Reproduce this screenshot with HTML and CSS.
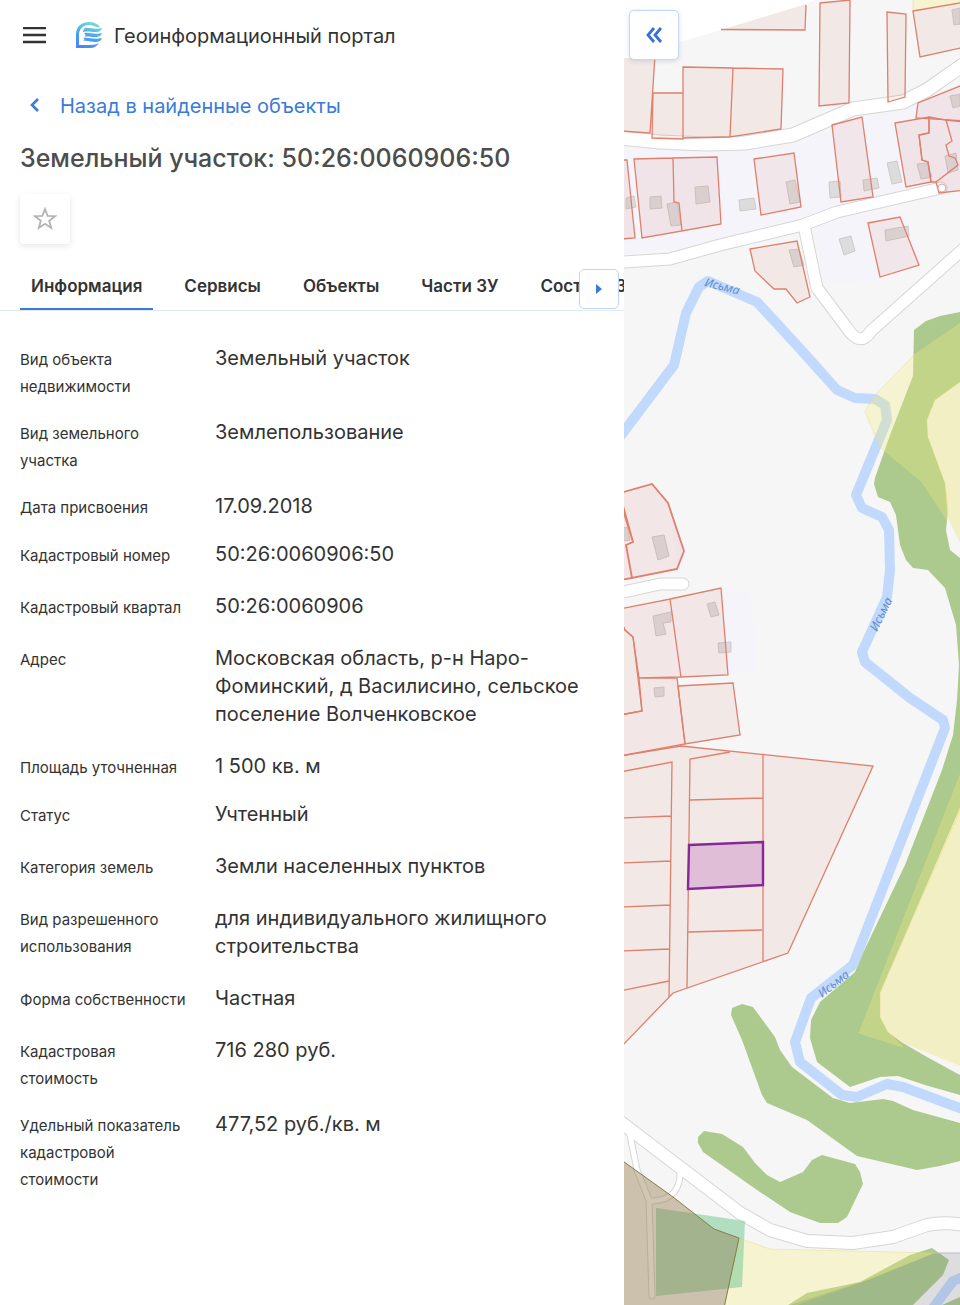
FILE: index.html
```html
<!DOCTYPE html>
<html lang="ru">
<head>
    <meta charset="UTF-8">
    <meta name="viewport" content="width=device-width, initial-scale=1.0">
    <title>Геоинформационный портал</title>
    <link rel="stylesheet" href="styles.css">
</head>
<body>
    <div class="layout">
        <main class="panel">
            <header class="header">
                <button class="icon-button" type="button" aria-label="Меню">
                    <svg width="24" height="18" viewBox="0 0 24 18"><path d="M0 1h23M0 8h23M0 15h23" stroke="#333" stroke-width="2.4"/></svg>
                </button>
                <svg class="logo" width="28" height="28" viewBox="0 0 28 28">
                    <defs>
                        <linearGradient id="logoFill" gradientUnits="userSpaceOnUse" x1="8" y1="27" x2="18" y2="0">
                            <stop offset="0" stop-color="#4a84f5"/>
                            <stop offset="0.5" stop-color="#4aa5ee"/>
                            <stop offset="1" stop-color="#78e0d4"/>
                        </linearGradient>
                    </defs>
                    <g fill="url(#logoFill)">
                        <path d="M0 26V13C0 5 5 0 13 0c5 0 9 2 11 5-4 1-7-2-11-2C7 3 3 7 3 13v10h11c4 0 7-1 9-2-2 3-5 5-9 5z"/>
                        <path d="M9 6c5-1 9 2 17 0-1 3-3 4-6 4-5 0-8-1-13 0 0-2 1-3 2-4zM8 11c6-1 10 2 18 0-1 3-3 4-7 4-5 0-7-1-11 0 2-1 2-2 0-4zM7 16c6-1 11 2 19 0-1 3-3 4-7 4-4 0-7-2-12-1 2-1 2-2 0-3z"/>
                    </g>
                </svg>
                <span class="portal-name">Геоинформационный портал</span>
            </header>

            <a class="back" href="#">
                <svg width="10" height="16" viewBox="0 0 10 16"><path d="M8 1L2 7l6 6" fill="none" stroke="#3b7bd8" stroke-width="2.6"/></svg>
                <span>Назад в найденные объекты</span>
            </a>

            <h1>Земельный участок: 50:26:0060906:50</h1>

            <button class="favorite" type="button" aria-label="В избранное">
                <svg width="26" height="26" viewBox="0 0 26 26"><path d="M13 3l2.6 6.900 7.400.3-5.800 4.600 2 7.100L13 17.800l-6.200 4.100 2-7.100L3 10.200l7.400-.3z" fill="none" stroke="#b3b3b3" stroke-width="1.8"/></svg>
            </button>

            <div class="tabs-wrap">
                <nav class="tabs">
                    <a class="tab active" href="#">Информация</a>
                    <a class="tab" href="#">Сервисы</a>
                    <a class="tab" href="#">Объекты</a>
                    <a class="tab" href="#">Части ЗУ</a>
                    <a class="tab" href="#">Состав ЕЗП</a>
                </nav>
                <button class="tabs-next" type="button" aria-label="Далее">
                    <svg width="8" height="10" viewBox="0 0 8 10"><path d="M1 0l6 5-6 5z" fill="#3b7bd8"/></svg>
                </button>
            </div>

            <dl class="info">
                <div class="row"><dt>Вид объекта недвижимости</dt><dd>Земельный участок</dd></div>
                <div class="row"><dt>Вид земельного участка</dt><dd>Землепользование</dd></div>
                <div class="row"><dt>Дата присвоения</dt><dd>17.09.2018</dd></div>
                <div class="row wide"><dt>Кадастровый номер</dt><dd>50:26:0060906:50</dd></div>
                <div class="row wide"><dt>Кадастровый квартал</dt><dd>50:26:0060906</dd></div>
                <div class="row wide"><dt>Адрес</dt><dd>Московская область, р-н Наро-Фоминский, д Василисино, сельское поселение Волченковское</dd></div>
                <div class="row"><dt>Площадь уточненная</dt><dd>1 500 кв. м</dd></div>
                <div class="row wide"><dt>Статус</dt><dd>Учтенный</dd></div>
                <div class="row wide"><dt>Категория земель</dt><dd>Земли населенных пунктов</dd></div>
                <div class="row wide"><dt>Вид разрешенного использования</dt><dd>для индивидуального жилищного строительства</dd></div>
                <div class="row wide"><dt>Форма собственности</dt><dd>Частная</dd></div>
                <div class="row"><dt>Кадастровая стоимость</dt><dd>716 280 руб.</dd></div>
                <div class="row"><dt>Удельный показатель кадастровой стоимости</dt><dd>477,52 руб./кв. м</dd></div>
            </dl>
        </main>

        <section class="map">
            <svg class="map-canvas" viewBox="624 0 336 1305" preserveAspectRatio="xMinYMin slice">
                <rect x="624" y="0" width="700" height="1305" fill="#f6f6f6"/>

                <!-- residential areas -->
                <g fill="#f5f4fa">
                    <path d="M620 150L740 149L800 143L863 115L918 103L960 86V190L906 198L800 220L700 243L620 256z"/>
                    <path d="M812 226L870 211L905 211L922 262L880 280L826 283z"/>
                    <path d="M722 592L750 592L757 670L728 675zM670 503L688 550L690 566L677 569z"/>
                </g>

                <!-- forest -->
                <g fill="#adca8e">
                    <path d="M960 312L940 316L926 321L914 330L913 376L890 435L875 478L874 484L878 497L890 502L896 515L900 545L906 560L913 568L928 570L945 588L956 625L959 665L957 700L953 735L942 770L905 865L862 955L855 972L820 1002L811 1020L810 1038L817 1062L850 1087L880 1077L898 1076L925 1085L960 1095V1075L927 1057L903 1043L888 1032L880 1017V993L960 808V558L950 550L946 530L948 510L945 483L928 437L927 420L935 400L960 382z"/>
                    <path d="M732 1008L742 1004L753 1007L775 1037L780 1050L792 1067L833 1098L850 1103L883 1099L893 1101L913 1110L960 1123V1161L940 1166L917 1170L857 1156L807 1120L767 1103L762 1095L742 1040L731 1015z"/>
                    <path d="M698 1137L704 1131L722 1134L743 1147L755 1163L767 1175L780 1182L803 1172L812 1160L822 1155L855 1164L860 1172L863 1184L847 1217L838 1223H820L790 1212L757 1190L703 1152L698 1143z"/>
                    <path d="M788 1305L807 1293L860 1282L910 1255L932 1248L949 1260L943 1275L913 1305zM942 1305L960 1297V1305z"/>
                </g>

                <!-- river -->
                <path d="M616 442L674 365L686 313L699 287L708 281L757 302L803 352L837 390L855 398L875 399L885 405L887 420L856 495L862 508L882 517L889 530L890 570L887 597L862 652L865 662L910 698L943 720L945 728L917 800L853 965L811 998L795 1042L800 1062L842 1095L857 1097L887 1084L903 1087L965 1110" class="river"/>
                <path d="M933 1308L953 1281L965 1276" class="river"/>

                <!-- farmland -->
                <g fill="#f3efc4">
                    <path d="M960 382L935 400L927 420L928 437L945 483L948 518L960 543z"/>
                    <path d="M960 808L880 993V1017L888 1032L903 1043L960 1066z"/>
                </g>
                <g class="field">
                    <path d="M962 322L914 355L873 397L865 412L880 447L922 482L947 520L948 510L945 483L928 437L927 420L935 400L962 381z"/>
                    <path d="M962 770L859 1033L903 1047L888 1032L880 1017V993L962 806z"/>
                    <path d="M739 1238L770 1249L934 1253L870 1279L788 1308H724z"/>
                    <path d="M913 -2H962V3L913 11z"/>
                </g>
                <path d="M934 1253H960V1305H790L870 1279z" fill="#666670" fill-opacity="0.17"/>
                <path d="M934 1253H960" stroke="#bdbdbd"/>

                <!-- roads: casing first, surface over it -->
                <g class="road-casing">
                    <path d="M610 137L660 142L705 144L745 143L793 135L853 109L903 102L927 90L970 60" stroke-width="15"/>
                    <path d="M610 263L670 259L720 245L803 225L837 212L941 188" stroke-width="13"/>
                    <path d="M804 225L808 245L817 288L847 328Q860 348 871 331L970 243" stroke-width="13"/>
                    <path d="M610 595L660 584H683" stroke-width="13"/>
                    <path d="M610 1114L673 1162L740 1213L770 1230L807 1241L853 1243L893 1237L927 1225Q945 1221 970 1226" stroke-width="14"/>
                    <path d="M629 1130L637 1170L649 1200L652 1296M680 1168Q682 1200 652 1201" stroke-width="7"/>
                </g>
                <g class="road">
                    <path d="M610 137L660 142L705 144L745 143L793 135L853 109L903 102L927 90L970 60" stroke-width="13"/>
                    <path d="M610 263L670 259L720 245L803 225L837 212L941 188" stroke-width="11"/>
                    <path d="M804 225L808 245L817 288L847 328Q860 348 871 331L970 243" stroke-width="11"/>
                    <path d="M610 595L660 584H683" stroke-width="11"/>
                    <path d="M610 1114L673 1162L740 1213L770 1230L807 1241L853 1243L893 1237L927 1225Q945 1221 970 1226" stroke-width="12"/>
                    <path d="M629 1130L637 1170L649 1200L652 1296M680 1168Q682 1200 652 1201" stroke-width="5"/>
                </g>

                <!-- buildings -->
                <g class="building">
                    <path d="M695 187L708 186L710 202L696 204zM650 197L661 196L662 208L650 209zM667 204L677 202L681 225L671 226zM739 200L754 198L756 209L740 211zM786 182L795 180L800 202L790 204z"/>
                    <path d="M829 182L840 181L841 197L830 198zM863 180L877 178L879 188L864 191zM887 163L897 161L902 182L892 184zM917 164L927 163L932 177L921 179zM945 156L956 153L958 170L948 173zM950 96L960 94V106L953 108zM952 10L960 8V24L954 25z"/>
                    <path d="M839 239L851 236L855 251L844 255zM885 230L908 226L909 236L886 241zM789 250L799 249L804 265L794 267zM626 198L634 196L636 207L626 209z"/>
                    <path d="M652 537L664 535L669 556L658 560zM653 616L671 612V622L663 623L666 634L656 636zM707 604L715 602L719 615L711 617zM718 643L731 642V652L719 653zM654 688L664 687V696L655 697zM623 528L627 527L630 540L623 541z"/>
                </g>

                <!-- cadastral parcels -->
                <g class="parcel">
                    <path d="M620 55H655L650 133L620 131zM653 93H683V139L652 138zM683 67L733 68L730 137L683 138zM733 68L783 69L781 129L730 137z"/>
                    <path d="M820 3L850 0L849 103L819 106zM887 12L906 14L905 97L888 102zM913 11L965 2V47L920 57z"/>
                    <path d="M721 29L806 4L805 30z" stroke="none"/>
                    <path d="M832 125L862 117L873 197L841 202zM754 159L794 153L801 207L761 215zM750 249L797 241L810 297L797 303L786 289H774L755 271zM868 223L900 217L919 265L880 277z"/>
                </g>
                <g class="parcel pink">
                    <path d="M620 160H627L635 238L620 239zM634 159L673 158L674 202L679 203L682 231L642 238zM673 158L717 157L721 224L682 231L679 203L674 202z"/>
                    <path d="M965 84L918 103L916 118L965 121zM895 123L929 117V133L919 135L922 160L928 162L931 182L906 187z"/>
                    <path d="M929 117L946 120L952 141L946 145L949 156L955 158L958 165L936 182H931L928 162L922 160L919 135L929 133zM946 120L965 122V190L939 193L936 182L958 165L955 158L949 156L946 145L952 141z"/>
                    <path d="M620 493L652 484L668 503L684 551L677 569L632 578L626 545L633 542L620 495zM620 500L633 542L626 545L632 578L620 580z" stroke-width="1.8"/>
                    <path d="M620 609L670 599L681 677L639 678L633 637L625 630L620 620zM670 599L721 588L728 675L681 677zM639 678H677L685 744L620 756V715L642 711z"/>
                </g>
                <circle cx="942" cy="188" r="4" fill="#fff" stroke="#d9a9a4"/>
                <g class="parcel">
                    <path d="M620 620L625 630L633 637L642 711L620 715zM678 686L733 683L740 735L685 744z"/>
                    <path d="M620 756L681 746L873 766L788 953L673 993L620 1048z"/>
                    <path d="M620 772L672 762L669 997M620 818L671 816M620 863L671 861M620 907L670 905M620 951L669 949M620 991L669 981M730 752L690 759L687 988M763 754V961M690 800L763 798M688 932L762 930" fill="none"/>
                </g>
                <path d="M689 845L763 842V885L688 889z" fill="#cf93c8" fill-opacity="0.5" stroke="#87289a" stroke-width="2.4"/>

                <!-- zones in the bottom corner -->
                <path d="M656 1208L745 1221L742 1287L656 1296z" fill="#78cb96" fill-opacity="0.55"/>
                <path d="M620 1159L673 1197L714 1229L739 1238L724 1308H620z" fill="#8f7745" fill-opacity="0.42" stroke="#8a7c4c"/>

                <path d="M610 -10H840L806 4L721 30L680 42L655 58H610z" fill="#fff"/>
                <path d="M721 29.5L805 30L806 5" fill="none" stroke="#df7f6c" stroke-width="1.3"/>

                <g class="river-name">
                    <text transform="translate(704 286) rotate(14)">Исьма</text>
                    <text transform="translate(877 632) rotate(-64)">Исьма</text>
                    <text transform="translate(822 998) rotate(-38)">Исьма</text>
                </g>
            </svg>
            <button class="collapse" type="button" aria-label="Свернуть панель">
                <svg width="18" height="18" viewBox="0 0 18 18"><path d="M9 2L3 9l6 7M16 2l-6 7 6 7" fill="none" stroke="#3570dc" stroke-width="2.8"/></svg>
            </button>
        </section>
    </div>
</body>
</html>
```
FILE: styles.css
```css
* {
    box-sizing: border-box;
}

body {
    margin: 0;
    font-family: Inter, 'Liberation Sans', sans-serif;
    font-size: 20px;
    line-height: 28px;
    color: #333;
    background-color: #fff;
}

button {
    padding: 0;
    border: none;
    background-color: #fff;
    cursor: pointer;
    display: flex;
    justify-content: center;
    align-items: center;
}

a {
    color: inherit;
    text-decoration: none;
}

.layout {
    display: flex;
    min-height: 100vh;
}

.panel {
    flex: 0 0 65%;
    min-width: 0;
}

.header {
    display: flex;
    align-items: center;
    padding: 21px 20px 0;
}

.icon-button {
    width: 30px;
    height: 30px;
}

.logo {
    margin: 0 10px 0 26px;
}

.back {
    display: flex;
    align-items: center;
    gap: 20px;
    padding: 41px 20px 0 30px;
    color: #3b7bd8;
}

h1 {
    margin: 22px 20px 20px;
    font-size: 25px;
    line-height: 32px;
    font-weight: 500;
    color: #4d4d4d;
}

.favorite {
    width: 50px;
    height: 50px;
    margin-left: 20px;
    border-radius: 4px;
    box-shadow: 0 2px 6px rgba(0, 0, 0, 0.1);
}

.tabs-wrap {
    position: relative;
    margin-top: 18px;
    border-bottom: 1px solid #e3e9f0;
}

.tabs {
    display: flex;
    gap: 20px;
    padding-left: 20px;
    overflow: hidden;
}

.tab {
    padding: 10px 11px 8px;
    border-bottom: 2px solid transparent;
    font-size: 17px;
    font-weight: 600;
    white-space: nowrap;
}

.tab.active {
    border-color: #3b7bd8;
}

.tabs-next {
    position: absolute;
    right: 5px;
    bottom: 1px;
    width: 40px;
    height: 40px;
    border: 1px solid #bfd5f5;
    border-radius: 5px;
}

.info {
    margin: 0;
    padding: 33px 20px;
}

.row {
    display: grid;
    grid-template-columns: 175px 1fr;
    column-gap: 20px;
    padding-bottom: 20px;
}

.row.wide {
    padding-bottom: 24px;
}

dt {
    font-size: 15px;
    line-height: 27px;
    padding-top: 2px;
    margin-bottom: -2px;
}

dd {
    margin: 0;
}

.map {
    position: relative;
    flex: 1;
    min-width: 0;
    overflow: hidden;
}

.map-canvas {
    display: block;
    width: 100%;
    height: 100%;
}

.collapse {
    position: absolute;
    top: 10px;
    left: 5px;
    width: 50px;
    height: 50px;
    border: 1px solid #c4d9f7;
    border-radius: 5px;
    box-shadow: 0 1px 5px rgba(60, 100, 160, 0.2);
}

.river {
    fill: none;
    stroke: #c1d9fd;
    stroke-width: 10;
    stroke-linejoin: round;
}

.field {
    fill: #f6ec77;
    fill-opacity: 0.3;
    stroke: #e8da72;
    stroke-opacity: 0.4;
}

.road-casing {
    fill: none;
    stroke: #d6d6d6;
    stroke-linecap: round;
    stroke-linejoin: round;
}

.road {
    fill: none;
    stroke: #fff;
    stroke-linecap: round;
    stroke-linejoin: round;
}

.building {
    fill: #dcdcdc;
    stroke: #cdcbc9;
}

.parcel {
    fill: #cf6f55;
    fill-opacity: 0.1;
    stroke: #df7f6c;
    stroke-width: 1.3;
}

.parcel.pink {
    fill: #cc5c5c;
}

.river-name {
    font-family: 'Noto Sans', sans-serif;
    font-size: 12px;
    font-style: italic;
    fill: #5f8ccc;
}
```
